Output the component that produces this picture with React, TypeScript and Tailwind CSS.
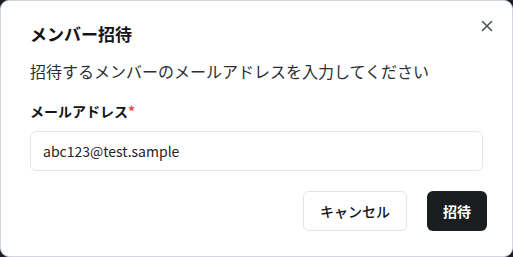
import React from "react";

export default function App() {
  return (
    <div className="w-[513px] h-[257px] bg-[#1c1f21]" style={{ fontFamily: '"Noto Sans CJK JP", "Noto Sans", sans-serif' }}>
      <div className="relative w-full h-full rounded-[9px] border border-[#cfd6e0] bg-white px-[29px] pt-[19px]">
        <button className="absolute right-[18px] top-[18px] text-[#4b5057]" aria-label="close">
          <svg width="14" height="14" viewBox="0 0 14 14" fill="none" stroke="currentColor" strokeWidth="1.6" strokeLinecap="round">
            <path d="M2.5 2.5 L11.5 11.5 M11.5 2.5 L2.5 11.5" />
          </svg>
        </button>
        <h2 className="text-[17px] font-bold leading-[28px] text-[#111418]">メンバー招待</h2>
        <p className="mt-[11px] text-[16px] leading-[24px] text-[#2b2f33]">招待するメンバーのメールアドレスを入力してください</p>
        <label className="mt-[18px] block text-[14px] font-bold leading-[20px] text-[#111418]">
          メールアドレス<span className="text-[#ef4444]">*</span>
        </label>
        <div className="mt-[10px] flex h-[40px] items-center rounded-[6px] border border-[#e2e6ec] px-[12px] text-[14px] text-[#1f2328]">
          abc123@test.sample
        </div>
        <div className="mt-[20px] flex justify-end gap-[20px]">
          <button className="h-[40px] w-[104px] rounded-[6px] border border-[#e2e6ec] bg-white text-[14px] font-medium text-[#111418]">キャンセル</button>
          <button className="h-[40px] w-[60px] rounded-[6px] bg-[#1a1e1f] text-[14px] font-bold text-white -mr-[4px]">招待</button>
        </div>
      </div>
    </div>
  );
}
